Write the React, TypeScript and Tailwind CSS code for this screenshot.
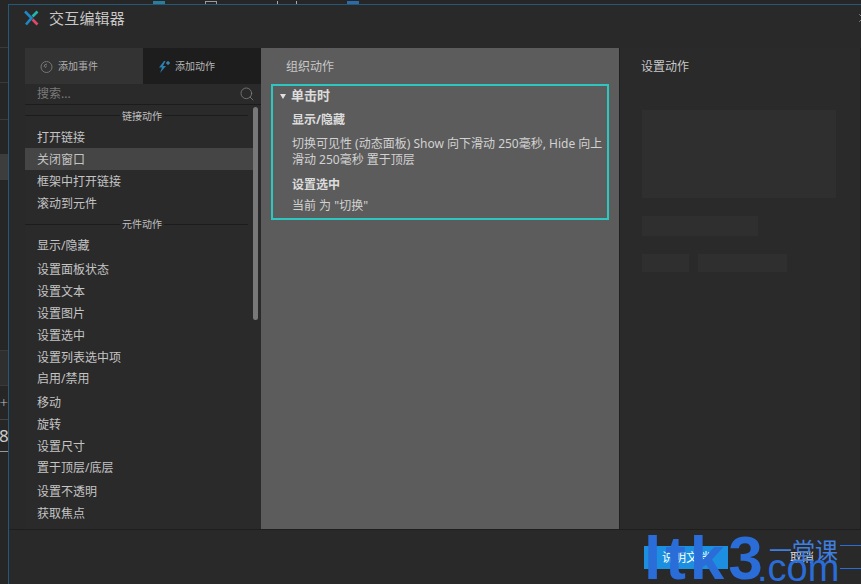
import { Search, X } from "lucide-react";

const font = { fontFamily: '"Noto Sans", "Noto Sans CJK SC", sans-serif' };

const linkActions = ["打开链接", "关闭窗口", "框架中打开链接", "滚动到元件"];

const widgetActions = [
  { label: "显示/隐藏", cls: "" },
  { label: "设置面板状态", cls: "mt-[2px]" },
  { label: "设置文本", cls: "" },
  { label: "设置图片", cls: "" },
  { label: "设置选中", cls: "" },
  { label: "设置列表选中项", cls: "" },
  { label: "启用/禁用", cls: "-mt-px" },
  { label: "移动", cls: "mt-[2px]" },
  { label: "旋转", cls: "" },
  { label: "设置尺寸", cls: "" },
  { label: "置于顶层/底层", cls: "-mt-px" },
  { label: "设置不透明", cls: "mt-[2px]" },
  { label: "获取焦点", cls: "" },
  { label: "展开/折叠树节点", cls: "" },
];

const Row = ({ label, active, cls }: { label: string; active?: boolean; cls?: string }) => (
  <div className={`flex h-[22px] shrink-0 items-center pl-3 pt-[2px] text-xs text-[#c4c4c4] ${active ? "bg-[#454545]" : ""} ${cls ?? ""}`}>
    {label}
  </div>
);

const GroupTitle = ({ label, cls }: { label: string; cls: string }) => (
  <div className={`flex shrink-0 items-center pr-[5px] ${cls}`}>
    <div className="h-px w-[95px] shrink-0 bg-[#1c1c1c]" />
    <span className="px-[2px] text-[10px] leading-none text-[#c0c0c0]">{label}</span>
    <div className="h-px flex-1 bg-[#1c1c1c]" />
  </div>
);

const BackStrip = () => (
  <div className="flex w-2 shrink-0 flex-col bg-[#262626]">
    <div className="h-[48px] shrink-0 border-b border-[#3a3a3a]" />
    <div className="h-[35px] shrink-0 border-b border-[#3a3a3a]" />
    <div className="h-[37px] shrink-0 border-b border-[#3a3a3a]" />
    <div className="h-[34px] shrink-0" />
    <div className="h-[26px] shrink-0 bg-[#3d3d3d]" />
    <div className="h-[170px] shrink-0" />
    <div className="h-[36px] shrink-0 border-y border-[#3a3a3a] bg-[#2f2f2f]" />
    <div className="flex h-[34px] shrink-0 items-center justify-end overflow-hidden border-b border-[#444] text-[15px] font-light text-[#bbb]">+</div>
    <div className="flex h-[32px] shrink-0 items-center justify-start overflow-hidden border-b border-[#999] text-[17px] leading-none text-[#ccc]">
      <span className="-ml-px">8</span>
    </div>
  </div>
);

export default function App() {
  return (
    <div className="relative flex h-[584px] w-[861px] overflow-hidden bg-[#292929]" style={font}>
      <BackStrip />
      <div className="flex min-w-0 flex-1 flex-col">
        {/* bits of the page behind the dialog */}
        <div className="flex h-1 shrink-0 items-end gap-[40px] bg-[#262626] pl-[145px]">
          <div className="h-[3px] w-[12px] bg-[#2b7d9c]" />
          <div className="h-[3px] w-[12px] border-x border-t border-[#9a9a9a]" />
          <div className="ml-[20px] h-[3px] w-[20px] border-x border-[#aaa]" />
          <div className="ml-[10px] h-[3px] w-[12px] bg-[#2c6aa8]" />
        </div>

        <div className="flex min-h-0 flex-1 flex-col border-l border-t border-[#23597a] bg-[#292929]">
          <div className="flex h-[43px] shrink-0 items-center overflow-hidden pb-[17px] pl-[15px]">
            <svg width="15" height="16" viewBox="0 0 15 16" fill="none" strokeWidth="2.6">
              <path d="M1 1.5 L7.5 8 L2 14.5" stroke="#1e88c7" />
              <path d="M13.5 1.5 L8.5 6.5" stroke="#22b5b0" />
              <path d="M8.5 9.5 L13.5 14.5" stroke="#e0486a" />
            </svg>
            <span className="ml-[10px] text-[15px] leading-none tracking-[0.2px] text-[#c8c8c8]">交互编辑器</span>
            <X className="-mr-[9px] ml-auto h-[14px] w-[14px] shrink-0 text-[#ccc]" strokeWidth={1} />
          </div>

          <div className="flex h-[482px] shrink-0 border-b border-[#1e1e1e] pl-4">
            {/* left panel */}
            <div className="flex w-[236px] shrink-0 flex-col bg-[#2a2a2a]">
              <div className="flex h-9 shrink-0">
                <div className="flex w-[118px] items-center bg-[#333333] pl-[15px] pt-px text-[10px] text-[#b0b0b0]">
                  <svg width="14" height="14" viewBox="0 0 14 14" fill="none" stroke="#777" strokeWidth="1">
                    <circle cx="6.5" cy="7" r="5.5" />
                    <path d="M4 7a3 3 0 0 1 3-3M5.5 8a1.5 1.5 0 0 1 1.5-2" />
                  </svg>
                  <span className="ml-[4px]">添加事件</span>
                </div>
                <div className="flex w-[118px] items-center bg-[#1d1d1d] pl-[14px] pt-px text-[10px] text-[#b8b8b8]">
                  <svg width="14" height="14" viewBox="0 0 14 14" fill="#2a7fb5">
                    <path d="M7 1 L2 7.5 H5 L3 13 L9 6 H6 L8.5 1 Z" />
                    <path d="M11 1v4M9 3h4" stroke="#4aa3d6" strokeWidth="1" />
                  </svg>
                  <span className="ml-[4px]">添加动作</span>
                </div>
              </div>
              <div className="flex h-[21px] shrink-0 items-center justify-between border-b border-[#1c1c1c] pl-3 pr-[6px]">
                <span className="text-xs text-[#7a7a7a]">搜索...</span>
                <Search className="h-4 w-4 text-[#808080]" strokeWidth={1.2} />
              </div>
              <div className="flex min-h-0 flex-1">
                <div className="flex min-w-0 flex-1 flex-col overflow-hidden">
                  <GroupTitle label="链接动作" cls="h-[21px]" />
                  {linkActions.map((a, i) => (
                    <Row key={a} label={a} active={i === 1} />
                  ))}
                  <GroupTitle label="元件动作" cls="h-[20px]" />
                  {widgetActions.map((a) => (
                    <Row key={a.label} label={a.label} cls={a.cls} />
                  ))}
                </div>
                <div className="w-2 shrink-0 pt-[2px]">
                  <div className="h-[213px] w-[5px] rounded-sm bg-[#787878]" />
                </div>
              </div>
            </div>

            {/* center panel */}
            <div className="w-[358px] shrink-0 bg-[#5c5c5c]">
              <div className="flex h-9 items-center pl-[25px] pt-[2px] text-xs text-[#c8c8c8]">组织动作</div>
              <div className="ml-[10px] h-[136px] w-[338px] border-2 border-[#2cc7c0] text-[#dcdcdc]">
                <div className="flex h-[20px] items-center pl-[7px] text-[13px] font-bold">
                  <span className="h-0 w-0 border-x-[3px] border-t-[5px] border-x-transparent border-t-[#e0e0e0]" />
                  <span className="ml-[5px]">单击时</span>
                </div>
                <div className="flex h-[26px] items-center pl-[19px] pt-[2px] text-xs font-bold">显示/隐藏</div>
                <div className="pl-[19px] pt-[4px] text-xs leading-[16px] text-[#d2d2d2]">
                  切换可见性 (动态面板) Show 向下滑动 250毫秒, Hide 向上滑动 250毫秒 置于顶层
                </div>
                <div className="flex h-[26px] items-center pl-[19px] pt-[7px] text-xs font-bold">设置选中</div>
                <div className="flex h-[20px] items-center pl-[19px] pt-[4px] text-xs text-[#d2d2d2]">当前 为 "切换"</div>
              </div>
            </div>

            {/* right panel */}
            <div className="flex min-w-0 flex-1 flex-col border-x border-[#202020] bg-[#2a2a2a] pl-[22px]">
              <div className="-ml-px flex h-9 shrink-0 items-center pt-[2px] text-xs text-[#c8c8c8]">设置动作</div>
              <div className="mt-[26px] h-[88px] w-[194px] bg-[#2f2f2f]" />
              <div className="mt-[18px] h-5 w-[116px] bg-[#2f2f2f]" />
              <div className="mt-[18px] flex gap-[9px]">
                <div className="h-[18px] w-[47px] bg-[#2f2f2f]" />
                <div className="h-[18px] w-[89px] bg-[#2f2f2f]" />
              </div>
            </div>
          </div>

          <div className="flex flex-1 items-start pl-[635px] pt-[16px]">
            <div className="flex h-[23px] w-[84px] items-center justify-center bg-[#1c8fe0] text-xs text-white">说明文档</div>
            <div className="ml-[62px] flex h-[23px] items-center text-xs text-[#d8d8d8]">取消</div>
          </div>
        </div>
      </div>

      {/* site watermark */}
      <div className="absolute left-[644px] top-[522px] text-[62px] font-bold leading-[72px] tracking-[4px] text-[#2a6cd8]" style={{ fontFamily: '"Liberation Sans", sans-serif' }}>
        ltk3
      </div>
      <div className="absolute left-[757px] top-[546px] text-[38px] leading-[44px] text-[#2a6cd8]" style={{ fontFamily: '"Liberation Sans", sans-serif' }}>
        .com
      </div>
      <div className="absolute left-[769px] top-[535px] text-[23px] leading-[28px] text-[#3f7fe0]" style={{ fontFamily: '"Noto Sans CJK SC", sans-serif' }}>
        一堂课
      </div>
      <div className="absolute left-[840px] top-[545px] h-px w-[21px] bg-[#2a6cd8]" />
      <div className="absolute left-[840px] top-[568px] h-px w-[21px] bg-[#2a6cd8]" />
    </div>
  );
}
